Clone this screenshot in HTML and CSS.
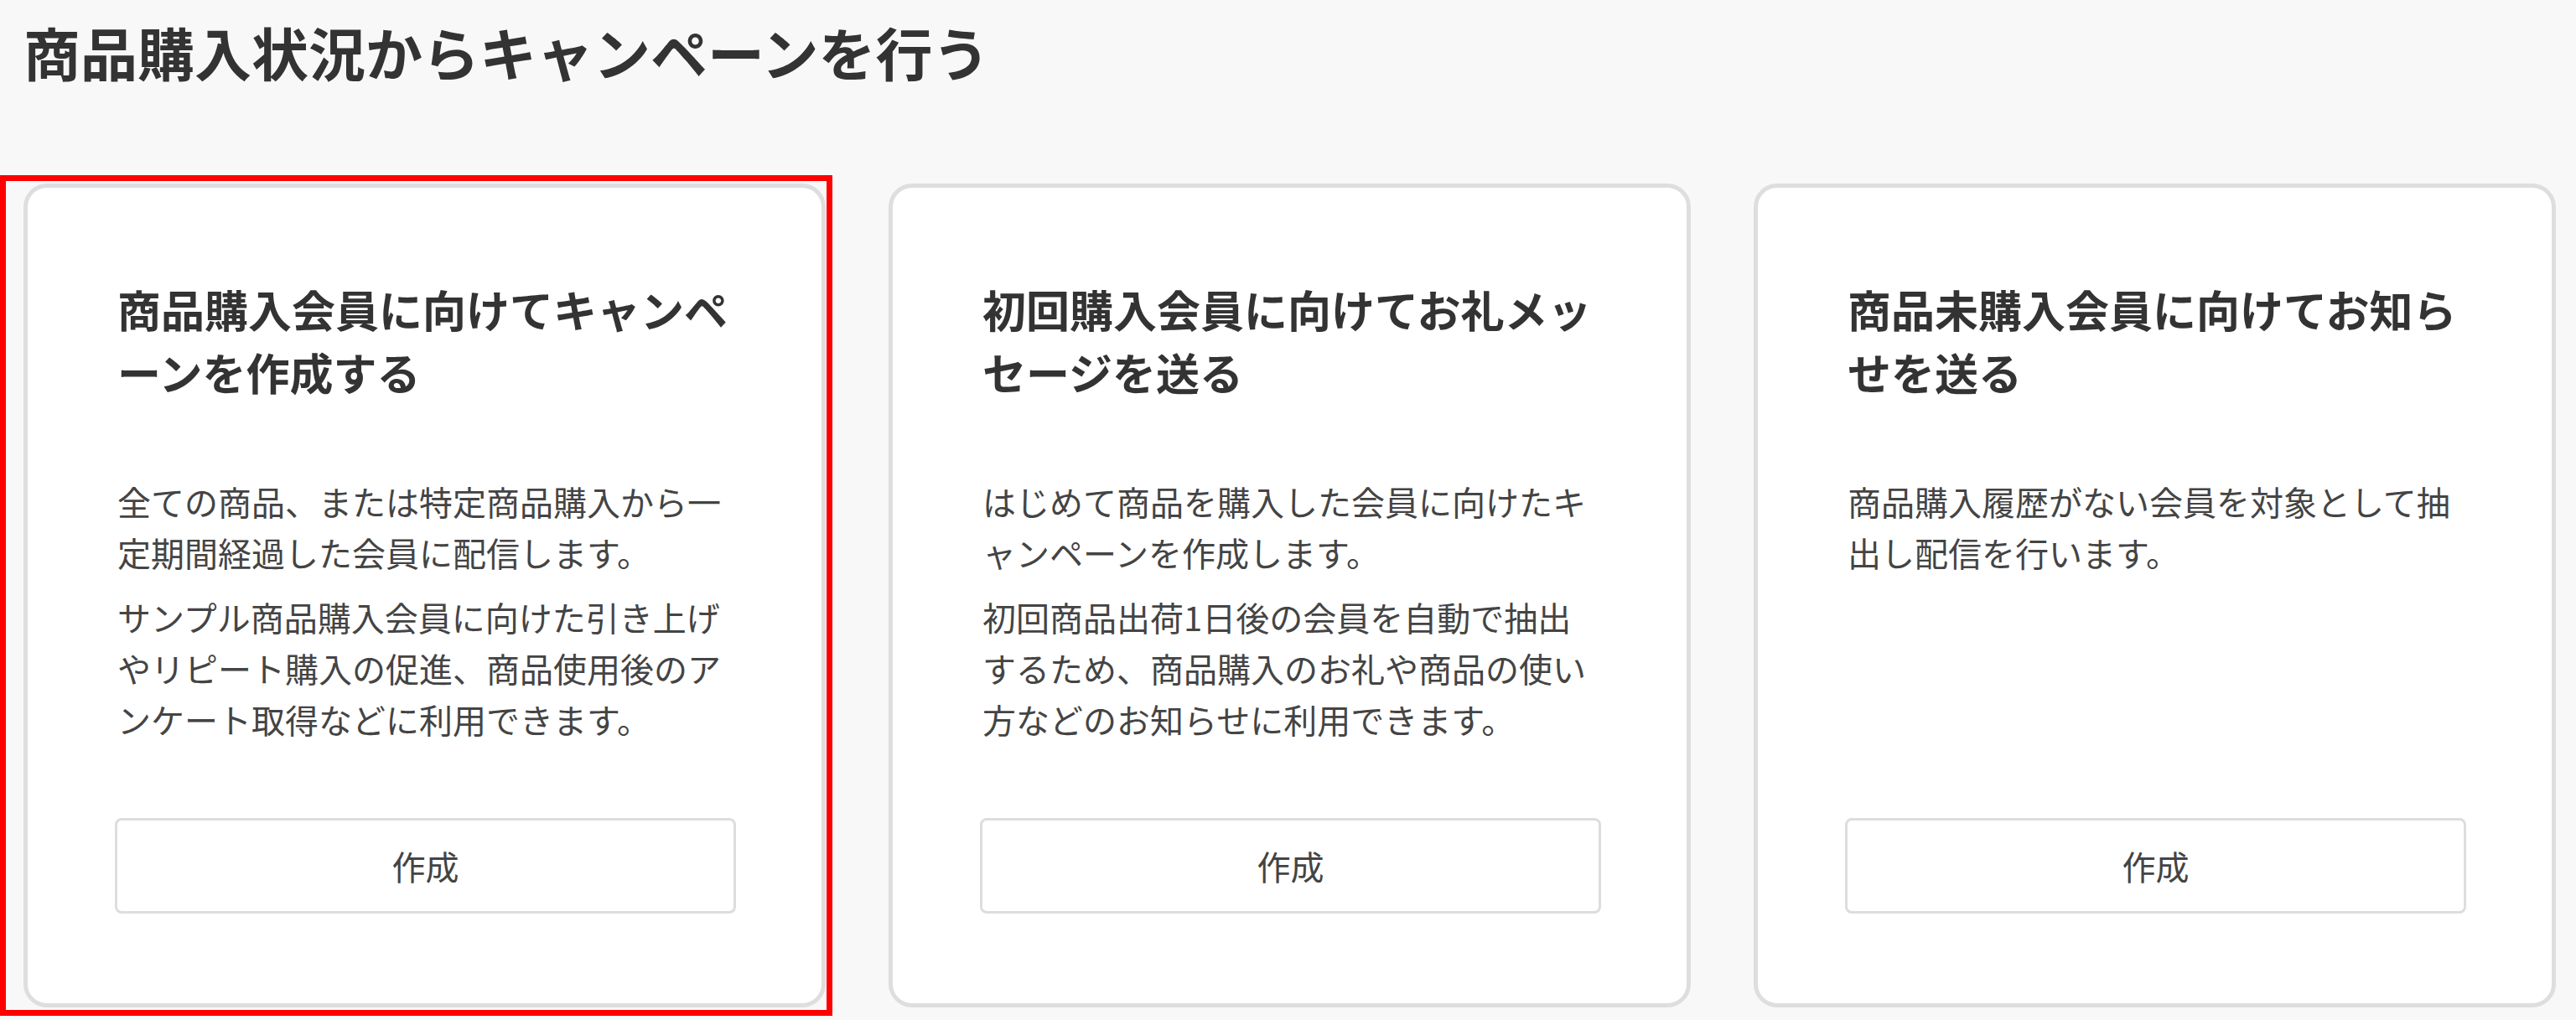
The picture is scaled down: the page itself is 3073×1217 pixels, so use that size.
FILE: index.html
```html
<!DOCTYPE html>
<html lang="ja">
<head>
    <meta charset="UTF-8">
    <meta name="viewport" content="width=device-width, initial-scale=1.0">
    <title>商品購入状況からキャンペーンを行う</title>
    <link rel="stylesheet" href="styles.css">
</head>
<body>
    <div id="page-container">
        <h1>商品購入状況からキャンペーンを行う</h1>
        <div id="card-list">
            <div class="card-frame">
                <div class="card">
                    <h2>商品購入会員に向けてキャンペーンを作成する</h2>
                    <div class="card-text">
                        <p>全ての商品、または特定商品購入から一定期間経過した会員に配信します。</p>
                        <p>サンプル商品購入会員に向けた引き上げやリピート購入の促進、商品使用後のアンケート取得などに利用できます。</p>
                    </div>
                    <button>作成</button>
                </div>
            </div>
            <div class="card">
                <h2>初回購入会員に向けてお礼メッセージを送る</h2>
                <div class="card-text">
                    <p>はじめて商品を購入した会員に向けたキャンペーンを作成します。</p>
                    <p>初回商品出荷1日後の会員を自動で抽出するため、商品購入のお礼や商品の使い方などのお知らせに利用できます。</p>
                </div>
                <button>作成</button>
            </div>
            <div class="card">
                <h2>商品未購入会員に向けてお知らせを送る</h2>
                <div class="card-text">
                    <p>商品購入履歴がない会員を対象として抽出し配信を行います。</p>
                </div>
                <button>作成</button>
            </div>
        </div>
    </div>
</body>
</html>
```

FILE: styles.css
```css
body {
    background: #f8f8f8;
    margin: 0;
    padding: 0;
    font-family: "Noto Sans CJK JP", "Noto Sans", sans-serif;
    color: #333;
}
#page-container {
    padding: 28px 24px 0 28px;
}
h1 {
    margin: 0;
    font-size: 68px;
    line-height: 68px;
    height: 68px;
    font-weight: 700;
    color: #333;
}
#card-list {
    display: grid;
    grid-template-columns: repeat(3, 1fr);
    align-items: start;
    gap: 75px;
    margin-top: 123px;
}
/* red highlight frame around the first card */
.card-frame {
    margin: -10px -8px 0 -28px;
    padding: 3px 1px 3px 21px;
    border: 7px solid #ff0000;
}
.card {
    box-sizing: border-box;
    height: 983px;
    display: flex;
    flex-direction: column;
    background-color: white;
    border: 5px solid #dedede;
    border-radius: 28px;
    padding: 107px;
    line-break: loose;
}
h2 {
    margin: 0 0 87px 0;
    font-size: 52px;
    line-height: 75px;
    font-weight: 700;
    color: #333;
}
.card-text p {
    margin: 0;
    font-size: 40px;
    line-height: 61px;
    color: #444;
}
.card-text p + p {
    margin-top: 16px;
}
button {
    margin-top: auto;
    margin-left: -3px;
    height: 114px;
    width: calc(100% + 8px);
    background-color: white;
    border: 3px solid #dddddd;
    border-radius: 8px;
    font-family: "Noto Sans CJK JP", "Noto Sans", sans-serif;
    font-size: 40px;
    color: #444;
    padding: 0;
}
```
